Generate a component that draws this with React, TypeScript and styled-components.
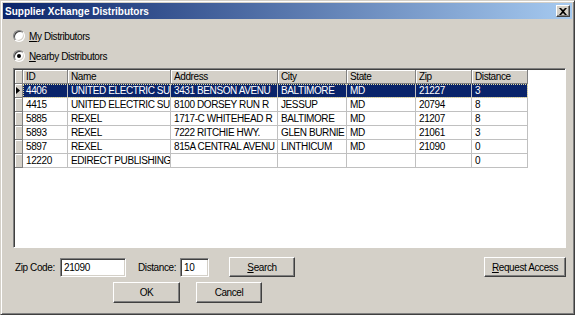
import styled, { createGlobalStyle } from 'styled-components';

// classic windows colours
const face = '#d4d0c8';
const shadow = '#808080';
const darkShadow = '#404040';

const GlobalStyle = createGlobalStyle`
  html, body {
    margin: 0;
    padding: 0;
    background: #ffffff;
  }
  body {
    font-family: "Liberation Sans", Arial, sans-serif;
    font-size: 10px;
    letter-spacing: -0.4px;
    color: #000;
  }
`;

const Window = styled.div`
  box-sizing: border-box;
  width: 575px;
  height: 315px;
  padding: 2px;
  background: ${face};
  border: 1px solid;
  border-color: ${face} ${darkShadow} ${darkShadow} ${face};
  box-shadow: inset 1px 1px 0 #fff, inset -1px -1px 0 ${shadow};
  display: flex;
  flex-direction: column;
`;

const TitleBar = styled.div`
  height: 16px;
  display: flex;
  align-items: center;
  padding: 0 2px;
  background: linear-gradient(to right, #0a246a, #a6caf0);
`;

const Title = styled.div`
  flex: 1;
  color: #fff;
  font-weight: bold;
  font-size: 10px;
  letter-spacing: 0;
`;

const CloseButton = styled.div`
  box-sizing: border-box;
  width: 14px;
  height: 12px;
  display: flex;
  align-items: center;
  justify-content: center;
  background: ${face};
  border: 1px solid;
  border-color: #fff ${darkShadow} ${darkShadow} #fff;
  box-shadow: inset -1px -1px 0 ${shadow};
`;

const Body = styled.div`
  flex: 1;
  display: flex;
  flex-direction: column;
  padding: 7px 6px 0 10px;
`;

const RadioRow = styled.label`
  height: 20px;
  display: flex;
  align-items: center;
  gap: 4px;
`;

const RadioCircle = styled.span<{ $checked?: boolean }>`
  position: relative;
  box-sizing: border-box;
  width: 12px;
  height: 12px;
  border-radius: 50%;
  background: #fff;
  border: 1px solid;
  border-color: ${shadow} #fff #fff ${shadow};
  box-shadow: inset 1px 1px 0 ${darkShadow}, inset -1px -1px 0 ${face};

  &::after {
    content: '';
    display: ${({ $checked }) => ($checked ? 'block' : 'none')};
    position: absolute;
    left: 3px;
    top: 3px;
    width: 4px;
    height: 4px;
    border-radius: 50%;
    background: #000;
  }
`;

/* ---------- grid ---------- */
const GridFrame = styled.div`
  box-sizing: border-box;
  margin-top: 2px;
  width: 553px;
  height: 180px;
  background: #fff;
  border: 1px solid;
  border-color: ${shadow} #fff #fff ${shadow};
  box-shadow: inset 1px 1px 0 ${darkShadow};
  padding: 1px 0 0 1px;
  overflow: hidden;
`;

const Row = styled.div`
  display: flex;
  height: 14px;
`;

const RowCells = styled.div<{ $selected?: boolean }>`
  display: flex;
  background: ${({ $selected }) => ($selected ? '#0a246a' : '#fff')};
  color: ${({ $selected }) => ($selected ? '#fff' : '#000')};
  outline: ${({ $selected }) => ($selected ? '1px dotted #e8e0a0' : 'none')};
  outline-offset: -1px;
`;

const HeaderCell = styled.div<{ $w: number }>`
  box-sizing: border-box;
  width: ${({ $w }) => $w}px;
  height: 14px;
  padding-left: 3px;
  line-height: 13px;
  background: ${face};
  border-right: 1px solid ${shadow};
  border-bottom: 1px solid ${shadow};
  box-shadow: inset 1px 1px 0 #fff;
  white-space: nowrap;
  overflow: hidden;
`;

const RowHeader = styled(HeaderCell)`
  display: flex;
  align-items: center;
  padding-left: 1px;
`;

const Cell = styled.div<{ $w: number }>`
  box-sizing: border-box;
  width: ${({ $w }) => $w}px;
  height: 14px;
  padding-left: 3px;
  line-height: 13px;
  border-right: 1px solid #c0c0c0;
  border-bottom: 1px solid #c0c0c0;
  white-space: nowrap;
  overflow: hidden;
`;

/* ---------- bottom controls ---------- */
const ControlRow = styled.div<{ $top: number }>`
  display: flex;
  align-items: center;
  margin-top: ${({ $top }) => $top}px;
`;

const Label = styled.span<{ $w: number; $left: number }>`
  width: ${({ $w }) => $w}px;
  margin-left: ${({ $left }) => $left}px;
  white-space: nowrap;
`;

const TextBox = styled.div<{ $w: number }>`
  box-sizing: border-box;
  width: ${({ $w }) => $w}px;
  height: 19px;
  padding: 2px 3px;
  line-height: 13px;
  background: #fff;
  border: 1px solid;
  border-color: ${shadow} #fff #fff ${shadow};
  box-shadow: inset 1px 1px 0 ${darkShadow}, inset -1px -1px 0 ${face};
`;

const Button = styled.button<{ $w: number; $h?: number; $left?: number }>`
  box-sizing: border-box;
  width: ${({ $w }) => $w}px;
  height: ${({ $h }) => $h ?? 20}px;
  margin-left: ${({ $left }) => ($left === undefined ? 'auto' : `${$left}px`)};
  padding: 0;
  font: inherit;
  letter-spacing: inherit;
  color: #000;
  background: ${face};
  border: 1px solid;
  border-color: #fff ${darkShadow} ${darkShadow} #fff;
  box-shadow: inset -1px -1px 0 ${shadow};
`;

const cols = [45, 103, 107, 69, 69, 56, 56];
const headers = ['ID', 'Name', 'Address', 'City', 'State', 'Zip', 'Distance'];
// text as far as the narrow columns show it
const rows = [
  ['4406', 'UNITED ELECTRIC SU', '3431 BENSON AVENU', 'BALTIMORE', 'MD', '21227', '3'],
  ['4415', 'UNITED ELECTRIC SU', '8100 DORSEY RUN R', 'JESSUP', 'MD', '20794', '8'],
  ['5885', 'REXEL', '1717-C WHITEHEAD R', 'BALTIMORE', 'MD', '21207', '8'],
  ['5893', 'REXEL', '7222 RITCHIE HWY.', 'GLEN BURNIE', 'MD', '21061', '3'],
  ['5897', 'REXEL', '815A CENTRAL AVENU', 'LINTHICUM', 'MD', '21090', '0'],
  ['12220', 'EDIRECT PUBLISHING', '', '', '', '', '0'],
];

export default function App() {
  return (
    <>
      <GlobalStyle />
      <Window>
        <TitleBar>
          <Title>Supplier Xchange Distributors</Title>
          <CloseButton>
            <svg width="8" height="7" viewBox="0 0 8 7">
              <path d="M0 0h2l2 2 2-2h2L5 3.5 8 7H6L4 5 2 7H0l3-3.5z" fill="#000" />
            </svg>
          </CloseButton>
        </TitleBar>
        <Body>
          <RadioRow>
            <RadioCircle />
            <span><u>M</u>y Distributors</span>
          </RadioRow>
          <RadioRow>
            <RadioCircle $checked />
            <span><u>N</u>earby Distributors</span>
          </RadioRow>

          <GridFrame>
            <Row>
              <RowHeader $w={8} />
              {headers.map((h, i) => (
                <HeaderCell key={h} $w={cols[i]}>{h}</HeaderCell>
              ))}
            </Row>
            {rows.map((r, ri) => (
              <Row key={r[0]}>
                <RowHeader $w={8}>
                  {ri === 0 && (
                    <svg width="4" height="7" viewBox="0 0 4 7">
                      <path d="M0 0l4 3.5L0 7z" fill="#000" />
                    </svg>
                  )}
                </RowHeader>
                <RowCells $selected={ri === 0}>
                  {r.map((v, ci) => (
                    <Cell key={ci} $w={cols[ci]}>{v}</Cell>
                  ))}
                </RowCells>
              </Row>
            ))}
          </GridFrame>

          <ControlRow $top={9}>
            <Label $w={45} $left={2}>Zip Code:</Label>
            <TextBox $w={66}>21090</TextBox>
            <Label $w={42} $left={12}>Distance:</Label>
            <TextBox $w={29}>10</TextBox>
            <Button $w={66} $left={20}><u>S</u>earch</Button>
            <Button $w={82}><u>R</u>equest Access</Button>
          </ControlRow>
          <ControlRow $top={5}>
            <Button $w={67} $h={21} $left={100}>OK</Button>
            <Button $w={66} $h={21} $left={16}>Cancel</Button>
          </ControlRow>
        </Body>
      </Window>
    </>
  );
}
